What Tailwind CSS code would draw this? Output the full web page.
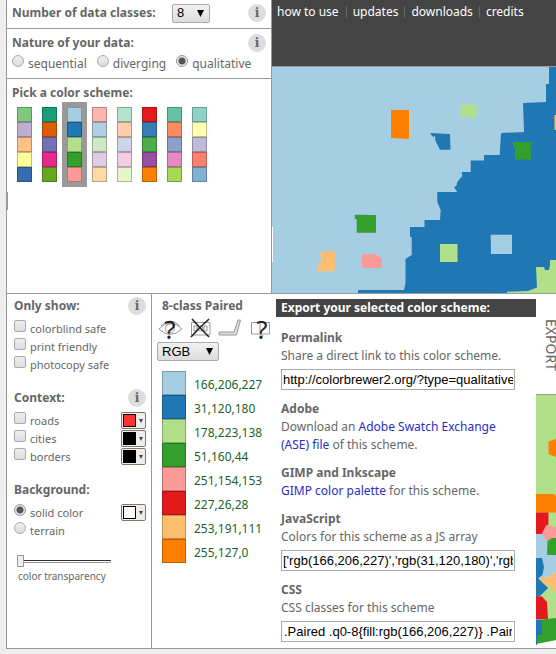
<!DOCTYPE html>
<html lang="en">
<head>
<meta charset="utf-8">
<title>ColorBrewer 2.0</title>
<script src="https://cdn.jsdelivr.net/npm/@tailwindcss/browser@4"></script>
</head>
<body class="min-h-screen overflow-x-hidden bg-[#eee] pl-[6px] font-['Noto_Sans','Open_Sans',sans-serif] text-[12px] leading-[18px] text-[#666]">
<main class="relative border-b border-l border-[#999] bg-white">
  <div class="absolute top-48 -left-px h-[18px] w-[2px] bg-[#999]"></div>

  <div class="flex border-b border-[#999]">
    <div class="w-[265px] shrink-0 border-r border-[#999]">
      <section class="flex h-[29px] items-center border-b border-[#999] pr-[5px] pb-[2px] pl-[5px]">
        <label for="classes" class="font-bold">Number of data classes:</label>
        <div class="relative ml-auto">
          <select id="classes" class="block h-[19px] w-[38px] appearance-none rounded-[2px] border border-[#aaa] bg-linear-to-b from-[#f2f2f2] to-[#dcdcdc] pl-1 font-['Liberation_Sans',sans-serif] text-[13px] leading-[16px] text-black"><option>8</option></select>
          <svg class="pointer-events-none absolute top-[6px] right-[6px]" width="7" height="7" viewBox="0 0 7 7"><path d="M0 0h7L3.500 7z" fill="#000"/></svg>
        </div>
        <button aria-label="About data classes" class="ml-[38px] size-[18px] rounded-full bg-[#ddd] font-['DejaVu_Serif',serif] text-[12px] leading-[17px] font-bold text-[#666]">i</button>
      </section>
      <section class="h-[50px] border-b border-[#999] pt-[5px] pr-[5px] pl-[5px]">
        <div class="flex items-center justify-between">
          <h2 class="font-bold">Nature of your data:</h2>
          <button aria-label="About data types" class="size-[18px] rounded-full bg-[#ddd] font-['DejaVu_Serif',serif] text-[12px] leading-[17px] font-bold text-[#666]">i</button>
        </div>
        <div class="flex gap-[10px] pt-px">
          <label class="flex gap-1"><input type="radio" name="nature" class="mt-[2px] size-3 appearance-none rounded-full border border-[#aaa] bg-linear-to-b from-[#eee] to-[#ddd]"><span class="pt-[2px]">sequential</span></label>
          <label class="flex gap-1"><input type="radio" name="nature" class="mt-[2px] size-3 appearance-none rounded-full border border-[#aaa] bg-linear-to-b from-[#eee] to-[#ddd]"><span class="pt-[2px]">diverging</span></label>
          <label class="flex gap-1"><input type="radio" name="nature" checked class="mt-[2px] size-3 appearance-none rounded-full border border-[#999] bg-[radial-gradient(circle,#555_3px,#e4e4e4_4px)]"><span class="pt-[2px]">qualitative</span></label>
        </div>
      </section>
      <section class="pt-[5px] pl-[5px]">
        <h2 class="font-bold">Pick a color scheme:</h2>
        <div id="schemes" class="flex"></div>
      </section>
    </div>

    <div class="min-w-0 flex-1">
      <header class="h-[67px] border-b border-[#999] bg-[#444] pt-[3px]">
        <nav class="flex items-center pl-[5px] whitespace-nowrap text-white">
          <a href="#" class="pr-[7px]">how to use</a><span class="h-3 w-px bg-[#666]"></span>
          <a href="#" class="px-[6px]">updates</a><span class="h-3 w-px bg-[#666]"></span>
          <a href="#" class="px-[6px]">downloads</a><span class="h-3 w-px bg-[#666]"></span>
          <a href="#" class="px-[6px]">credits</a>
        </nav>
      </header>
      <svg class="block h-[226px] w-full bg-[#a6cee3]" viewBox="272 67 284 226" preserveAspectRatio="xMinYMin slice" role="img" aria-label="Map">
        <path fill="#1f78b4" d="M549 67V84H546V102L523 103 524 132 501 133 499.700 155H484V160.500H470.700V172H461.700L462.300 176 457.300 182 456.300 186 454 187 457.300 192H437.300V202L440.700 210 440 220H424.500V227H410V237H411.700V255L405.500 259V283L404 290H358V293H556V67Z"/>
        <path fill="#b2df8a" d="M507 291.700 528 291 537 287.500 536 267H544L545 270H549L550 265V260H556V293H507Z"/>
        <path fill="#1f78b4" d="M430 133 450 134 450.500 149.700H440L435.500 141 435 136 433 137Z"/>
        <path fill="#ff7f00" d="M391 110H409V139L391 138Z"/>
        <path fill="#b2df8a" d="M460.500 104.500H476.500V117.500H460.500ZM440 244H457.500V262H440Z"/>
        <path fill="#fdbf6f" d="M554.500 115H556V130H554.500ZM320.700 251.300H336.700L335 254 334.700 271.300H317.300V264.300L320.700 263.700Z"/>
        <path fill="#33a02c" d="M513 142H532.500L530.700 144.500 531 159.500H515V148L513 147ZM354.700 214.700 376 215V232.700H356.700V219H354.700Z"/>
        <path fill="#fb9a99" d="M362 254.300H375.700L382 258.700 381.700 268H362Z"/>
        <path fill="#a6cee3" d="M490.700 234.700H512V254H491Z"/>
        <path fill="#fff" d="M272 227H273V262H272Z"/>
      </svg>
    </div>
  </div>

  <div class="flex h-[354px]">
    <div class="w-[145px] shrink-0 border-r border-[#999] pt-[3px] pr-[5px] pl-[7px]">
      <section class="pb-[15px]">
        <div class="flex items-center justify-between">
          <h2 class="font-bold">Only show:</h2>
          <button aria-label="About filters" class="size-[18px] rounded-full bg-[#ddd] font-['DejaVu_Serif',serif] text-[12px] leading-[17px] font-bold text-[#666]">i</button>
        </div>
        <div class="pt-[5px] text-[11px]">
          <label class="flex h-[18px] gap-1"><input type="checkbox" class="size-3 appearance-none rounded-[2px] border border-[#aaa] bg-linear-to-b from-[#eee] to-[#ddd]">colorblind safe</label>
          <label class="flex h-[18px] gap-1"><input type="checkbox" class="size-3 appearance-none rounded-[2px] border border-[#aaa] bg-linear-to-b from-[#eee] to-[#ddd]">print friendly</label>
          <label class="flex h-[18px] gap-1"><input type="checkbox" class="size-3 appearance-none rounded-[2px] border border-[#aaa] bg-linear-to-b from-[#eee] to-[#ddd]">photocopy safe</label>
        </div>
      </section>
      <section class="pb-[15px]">
        <div class="flex items-center justify-between pb-[5px]">
          <h2 class="font-bold">Context:</h2>
          <button aria-label="About context" class="size-[18px] rounded-full bg-[#ddd] font-['DejaVu_Serif',serif] text-[12px] leading-[17px] font-bold text-[#666]">i</button>
        </div>
        <div class="flex h-[18px] justify-between text-[11px]">
          <label class="flex gap-1"><input type="checkbox" class="size-3 appearance-none rounded-[2px] border border-[#aaa] bg-linear-to-b from-[#eee] to-[#ddd]">roads</label>
          <button aria-label="Road color" class="flex h-[17px] w-[25px] items-center gap-[3px] rounded-[2px] border border-[#8a7464] bg-[#eee] pl-px"><span class="size-[13px] border border-black bg-[#f33]"></span><svg width="4" height="4" viewBox="0 0 4 4"><path d="M0 0h4L2 4z" fill="#444"/></svg></button>
        </div>
        <div class="flex h-[18px] justify-between text-[11px]">
          <label class="flex gap-1"><input type="checkbox" class="size-3 appearance-none rounded-[2px] border border-[#aaa] bg-linear-to-b from-[#eee] to-[#ddd]">cities</label>
          <button aria-label="City color" class="flex h-[17px] w-[25px] items-center gap-[3px] rounded-[2px] border border-[#8a7464] bg-[#eee] pl-px"><span class="size-[13px] border border-black bg-black"></span><svg width="4" height="4" viewBox="0 0 4 4"><path d="M0 0h4L2 4z" fill="#444"/></svg></button>
        </div>
        <div class="flex h-[18px] justify-between text-[11px]">
          <label class="flex gap-1"><input type="checkbox" class="size-3 appearance-none rounded-[2px] border border-[#aaa] bg-linear-to-b from-[#eee] to-[#ddd]">borders</label>
          <button aria-label="Border color" class="flex h-[17px] w-[25px] items-center gap-[3px] rounded-[2px] border border-[#8a7464] bg-[#eee] pl-px"><span class="size-[13px] border border-black bg-black"></span><svg width="4" height="4" viewBox="0 0 4 4"><path d="M0 0h4L2 4z" fill="#444"/></svg></button>
        </div>
      </section>
      <section>
        <h2 class="pb-[5px] font-bold">Background:</h2>
        <div class="flex h-[18px] justify-between text-[11px]">
          <label class="flex gap-1"><input type="radio" name="bg" checked class="size-3 appearance-none rounded-full border border-[#999] bg-[radial-gradient(circle,#555_3px,#e4e4e4_4px)]">solid color</label>
          <button aria-label="Background color" class="flex h-[17px] w-[25px] items-center gap-[3px] rounded-[2px] border border-[#8a7464] bg-[#eee] pl-px"><span class="size-[13px] border border-black bg-white"></span><svg width="4" height="4" viewBox="0 0 4 4"><path d="M0 0h4L2 4z" fill="#444"/></svg></button>
        </div>
        <label class="flex h-[18px] gap-1 text-[11px]"><input type="radio" name="bg" class="size-3 appearance-none rounded-full border border-[#aaa] bg-linear-to-b from-[#eee] to-[#ddd]">terrain</label>
        <div class="pt-[15px] pl-[3px]">
          <input id="transparency" type="range" min="0" max="100" value="0" class="block h-3 w-[94px] appearance-none bg-[linear-gradient(#333,#333),linear-gradient(#999,#999)] bg-[length:100%_1px,100%_1px] bg-[position:0_5px,0_7px] bg-no-repeat [&::-webkit-slider-thumb]:h-3 [&::-webkit-slider-thumb]:w-[7px] [&::-webkit-slider-thumb]:appearance-none [&::-webkit-slider-thumb]:border [&::-webkit-slider-thumb]:border-[#999] [&::-webkit-slider-thumb]:bg-[#eee]">
          <label for="transparency" class="block pl-px text-[10px]">color transparency</label>
        </div>
      </section>
    </div>

    <div class="w-[124px] shrink-0 pt-[3px] pl-[5px]">
      <h2 class="pl-[5px] font-bold">8-class Paired</h2>
      <svg class="block" width="114" height="27" viewBox="157 315 114 27" fill="none" role="img" aria-label="Suitability of this scheme">
        <g stroke="#999" stroke-width="1">
          <path d="M159 329Q170 317 182 329Q170 340 159 329ZM161 326Q170 316 180 326"/>
          <circle cx="170" cy="328.500" r="4.500"/>
          <path d="M191.500 322.500H210V335H191.500Z"/><path d="M194 326H197V331H194ZM204 326H207V331H204Z"/><circle cx="200.500" cy="328.500" r="2.500"/>
          <path fill="#ddd" d="M219 332H234L238 320H240.500L236.500 335H219Z"/>
          <path d="M251.500 322.500H260V334H251.500ZM260 322.500H269.500V334H260M260 334L263 336"/>
        </g>
        <path d="M192 319Q201 329 209 337M209 319Q199 328 191 337" stroke="#222" stroke-width="1.600"/>
        <g fill="#222" font-family="Noto Sans, sans-serif" font-size="26" font-weight="400" text-anchor="middle"><text x="170" y="339">?</text><text x="262" y="339">?</text></g>
      </svg>
      <div class="relative w-[62px]">
        <select aria-label="Color system" class="block h-[19px] w-[62px] appearance-none rounded-[2px] border border-[#aaa] bg-linear-to-b from-[#f2f2f2] to-[#dcdcdc] pl-1 font-['Liberation_Sans',sans-serif] text-[13px] leading-[16px] text-black"><option>RGB</option></select>
        <svg class="pointer-events-none absolute top-[6px] right-[6px]" width="7" height="7" viewBox="0 0 7 7"><path d="M0 0h7L3.500 7z" fill="#000"/></svg>
      </div>
      <ul id="values" class="pt-[10px] pl-[5px] text-[#1c6429]"></ul>
    </div>

    <section class="min-w-0 flex-1 pt-[5px]">
      <h2 class="h-[18px] bg-[#444] pl-[5px] font-bold whitespace-nowrap text-white">Export your selected color scheme:</h2>
      <div class="flex flex-col gap-[10px] pt-3 pr-[21px] pl-[5px]">
        <div>
          <h3 class="font-bold">Permalink</h3>
          <label for="permalink" class="block whitespace-nowrap">Share a direct link to this color scheme.</label>
          <input id="permalink" readonly value="http://colorbrewer2.org/?type=qualitative&amp;scheme=Paired&amp;n=8" class="mt-1 block h-[21px] w-full border border-[#aaa] px-px font-['Liberation_Sans',sans-serif] text-[13px] text-black">
        </div>
        <div>
          <h3 class="font-bold">Adobe</h3>
          <p>Download an <a href="#" class="text-[#2c2cc4]">Adobe Swatch Exchange (ASE) file</a> of this scheme.</p>
        </div>
        <div>
          <h3 class="font-bold">GIMP and Inkscape</h3>
          <p><a href="#" class="text-[#2c2cc4]">GIMP color palette</a> for this scheme.</p>
        </div>
        <div>
          <h3 class="font-bold">JavaScript</h3>
          <label for="js" class="block">Colors for this scheme as a JS array</label>
          <input id="js" readonly value="['rgb(166,206,227)','rgb(31,120,180)','rgb(178,223,138)']" class="mt-1 block h-[21px] w-full border border-[#aaa] px-px font-['Liberation_Sans',sans-serif] text-[13px] text-black">
        </div>
        <div>
          <h3 class="font-bold">CSS</h3>
          <label for="css" class="block">CSS classes for this scheme</label>
          <input id="css" readonly value=".Paired .q0-8{fill:rgb(166,206,227)} .Paired .q1-8{fill:rgb(31,120,180)}" class="mt-1 block h-[21px] w-full border border-[#aaa] px-[2px] font-['Liberation_Sans',sans-serif] text-[13px] text-black">
        </div>
      </div>
    </section>

    <div class="flex w-5 shrink-0 flex-col">
      <button class="flex h-[101px] items-end overflow-hidden border-b border-[#999] pt-[25px] pl-[5px] text-[14px] leading-[20px] [writing-mode:vertical-rl]"><span>EXPORT</span></button>
      <svg class="block w-full flex-1" viewBox="536 395 20 253" preserveAspectRatio="xMinYMin slice" aria-hidden="true">
        <path fill="#b2df8a" d="M536 395H556V640L536 644Z"/>
        <path fill="#ff7f00" d="M556 439 548.500 441.500V454L556 457ZM536 494H554L556 496V512.500H536Z"/>
        <path fill="#a6cee3" d="M536 534H556V580H536Z"/>
        <path fill="#e31a1c" d="M536 512.500H548.500V524L542 534H536ZM536 596 542 596.500 547 602 548 619H536Z"/>
        <path fill="#fb9a99" d="M546.500 525 556 527V537L547 541 542 533Z"/>
        <path fill="#33a02c" d="M547.500 541 552 538H556V555H547ZM542 619.500 556 618V640L536 644V635H542Z"/>
        <path fill="#1f78b4" d="M536 558H542L544 567 542.500 575 538.500 578 548 588 540 596H536ZM536 619.500H542V635H537V645H536Z"/>
        <path fill="#fdbf6f" d="M538 578 550 577 552 573H556V592L552 590 550 585H545Z"/>
      </svg>
    </div>
  </div>
</main>
<script>
const schemes = [
  ['#7fc97f','#beaed4','#fdc086','#ffff99','#386cb0'],
  ['#1b9e77','#d95f02','#7570b3','#e7298a','#66a61e'],
  ['#a6cee3','#1f78b4','#b2df8a','#33a02c','#fb9a99'],
  ['#fbb4ae','#b3cde3','#ccebc5','#decbe4','#fed9a6'],
  ['#b3e2cd','#fdcdac','#cbd5e8','#f4cae4','#e6f5c9'],
  ['#e41a1c','#377eb8','#4daf4a','#984ea3','#ff7f00'],
  ['#66c2a5','#fc8d62','#8da0cb','#e78ac3','#a6d854'],
  ['#8dd3c7','#ffffb3','#bebada','#fb8072','#80b1d3']
];
document.getElementById('schemes').innerHTML = schemes.map((s, i) =>
  `<button aria-label="Scheme ${i + 1}" class="p-[5px] ${i === 2 ? 'bg-[#999]' : ''}">${s.map(c =>
    `<span class="block size-[15px] border border-black/25" style="background:${c}"></span>`).join('')}</button>`).join('');
const values = ['166,206,227','31,120,180','178,223,138','51,160,44','251,154,153','227,26,28','253,191,111','255,127,0'];
document.getElementById('values').innerHTML = values.map(v =>
  `<li class="flex h-6 items-center gap-2"><span class="size-6 border border-black/25" style="background:rgb(${v})"></span><span class="pt-1">${v}</span></li>`).join('');
</script>
</body>
</html>
